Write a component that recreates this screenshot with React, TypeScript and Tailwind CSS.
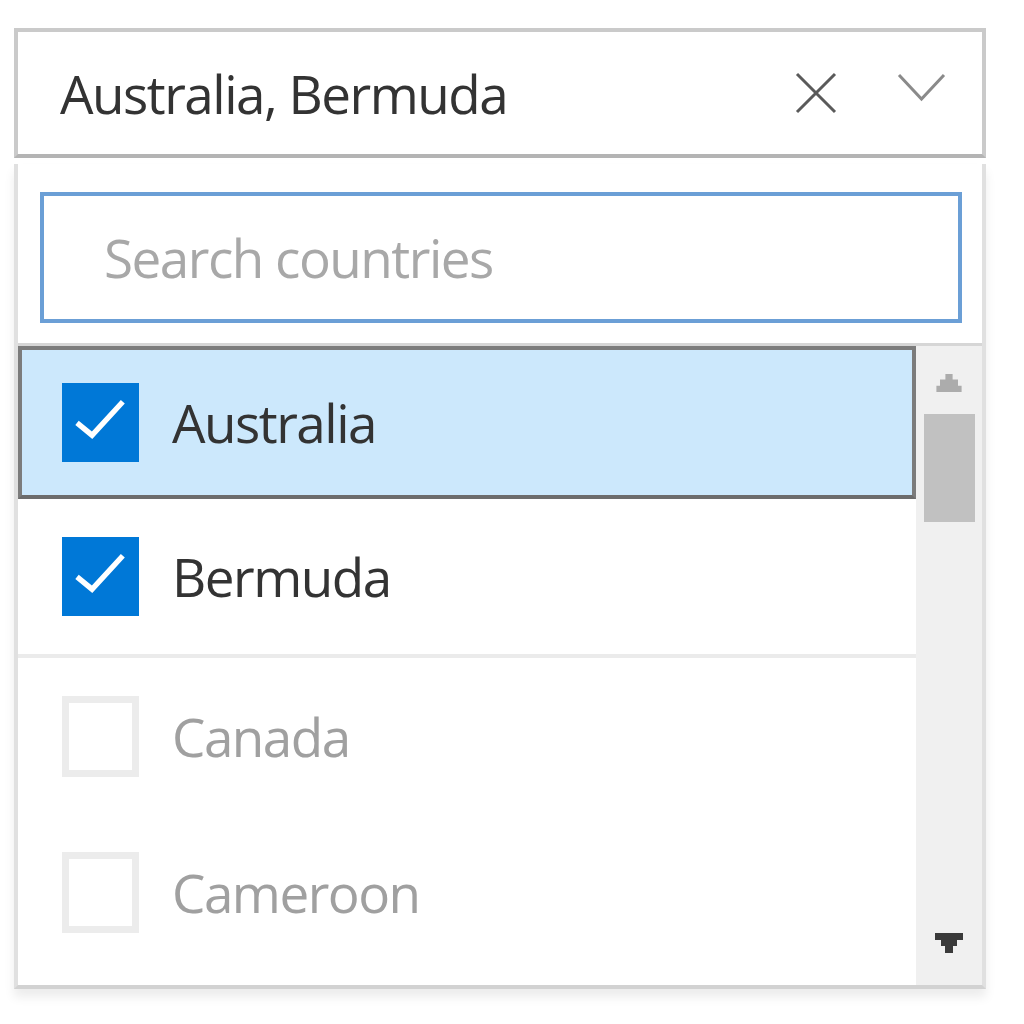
import React from 'react';

interface Country {
  name: string;
  checked: boolean;
}

const countries: Country[] = [
  { name: 'Australia', checked: true },
  { name: 'Bermuda', checked: true },
  { name: 'Canada', checked: false },
  { name: 'Cameroon', checked: false },
];

const font = { fontFamily: '"Open Sans", "Noto Sans", sans-serif' };

const CheckBox: React.FC<{ checked: boolean }> = ({ checked }) =>
  checked ? (
    <div className="w-[77px] h-[79px] bg-[#0078d7] flex items-center justify-center shrink-0">
      <svg width="77" height="79" viewBox="0 0 20 20">
        <path d="M3.9 10.1 L7.8 13.3 L15.8 4.6" fill="none" stroke="#ffffff" strokeWidth="1.4" />
      </svg>
    </div>
  ) : (
    <div className="w-[77px] h-[81px] border-[7px] border-[#ececec] bg-white shrink-0" />
  );

export default function App() {
  return (
    <div className="min-h-screen bg-white pt-[28px] pl-[14px]" style={font}>
      <div className="w-[972px]">
        {/* selected values */}
        <div className="h-[130px] border-[4px] border-[#cacaca] border-b-[#b4b4b4] bg-white flex items-center pl-[42px] pr-[36px]">
          <span className="text-[53px] text-[#333333] tracking-[-1.5px] leading-none">Australia, Bermuda</span>
          <svg className="ml-auto" width="42" height="42" viewBox="0 0 42 42">
            <path d="M2 2 L40 40 M40 2 L2 40" stroke="#5a5a5a" strokeWidth="3" fill="none" />
          </svg>
          <svg className="ml-[60px] -mt-[12px]" width="49" height="29" viewBox="0 0 49 29">
            <path d="M2 2 L24.5 26 L47 2" stroke="#8a8a8a" strokeWidth="3" fill="none" />
          </svg>
        </div>

        {/* dropdown panel */}
        <div className="mt-[6px] border-x-[4px] border-b-[4px] border-[#e0e0e0] border-b-[#d2d2d2] bg-white shadow-[0_8px_10px_rgba(0,0,0,0.08)]">
          <div className="pt-[28px] pb-[20px] pl-[22px] pr-[20px]">
            <div className="h-[131px] border-[4px] border-[#6b9fd6] flex items-center pl-[60px]">
              <span className="text-[53px] text-[#a8a8a8] tracking-[-1.5px] leading-none">Search countries</span>
            </div>
          </div>
          <div className="h-[3px] bg-[#d6d6d6]" />
          <div className="flex h-[639px]">
            <div className="flex-1 flex flex-col">
              {countries.map((c, i) => (
                <div
                  key={c.name}
                  className={
                    i === 0
                      ? 'h-[153px] bg-[#cce8fc] border-[4px] border-[#7c7c7c] border-b-[#6c6c6c] flex items-center pl-[40px] gap-[33px]'
                      : i === 1
                      ? 'h-[159px] border-b-[4px] border-[#ebebeb] flex items-center pl-[44px] gap-[33px]'
                      : 'h-[156px] flex items-center pl-[44px] gap-[33px]'
                  }
                >
                  <CheckBox checked={c.checked} />
                  <span
                    className={`text-[53px] tracking-[-1.5px] leading-none ${
                      c.checked ? 'text-[#333333]' : 'text-[#a0a0a0]'
                    }`}
                  >
                    {c.name}
                  </span>
                </div>
              ))}
            </div>

            {/* scrollbar */}
            <div className="w-[66px] bg-[#f0f0f0] flex flex-col items-center pt-[28px] pb-[32px]">
              <svg width="26" height="18" viewBox="0 0 28 20">
                <path d="M10 0 H18 V6 H24 V13 H28 V20 H0 V13 H4 V6 H10 Z" fill="#acacac" />
              </svg>
              <div className="mt-[22px] w-[51px] h-[108px] bg-[#c1c1c1]" />
              <div className="flex-1" />
              <svg width="28" height="20" viewBox="0 0 28 20">
                <path d="M0 0 H28 V7 H22 V13 H18 V20 H10 V13 H6 V7 H0 Z" fill="#3a3a3a" />
              </svg>
            </div>
          </div>
        </div>
      </div>
    </div>
  );
}
